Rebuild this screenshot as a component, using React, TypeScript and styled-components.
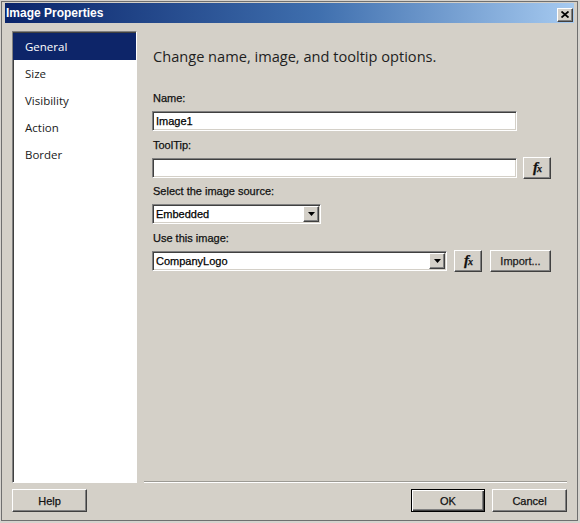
import React from 'react';
import styled, { createGlobalStyle, css } from 'styled-components';

const GlobalStyle = createGlobalStyle`
  html, body {
    margin: 0;
    padding: 0;
    background: #d6d3ce;
  }
  body {
    font-family: 'Liberation Sans', Arial, sans-serif;
    font-size: 11px;
    color: #000;
  }
  * {
    box-sizing: border-box;
  }
`;

const raised = css`
  background: #d4d0c8;
  border: 1px solid;
  border-color: #ffffff #404040 #404040 #ffffff;
  box-shadow: inset -1px -1px #808080;
`;

const sunken = css`
  background: #ffffff;
  border: 1px solid;
  border-color: #808080 #ffffff #ffffff #808080;
  box-shadow: inset 1px 1px #404040, inset -1px -1px #d4d0c8;
`;

// Tahoma-ish heavier look for the small dialog text
const heavy = css`
  -webkit-text-stroke: 0.25px currentColor;
`;

const Window = styled.div`
  margin: 1px 0 0 1px;
  width: 577px;
  height: 520px;
  background: #d4d0c8;
  border: 1px solid #6f6f6f;
  padding: 1px 3px 0 3px;
  display: flex;
  flex-direction: column;
`;

const TitleBar = styled.div`
  height: 20px;
  flex-shrink: 0;
  display: flex;
  align-items: center;
  justify-content: space-between;
  padding: 0 1px 0 1px;
  background: linear-gradient(to right, #0a246a 0%, #3f6fae 55%, #a6caf0 100%);
`;

const Title = styled.span`
  color: #fff;
  font-weight: bold;
  font-size: 12px;
`;

const CloseButton = styled.button`
  ${raised};
  width: 16px;
  height: 14px;
  padding: 0;
  margin-top: 3px;
  display: flex;
  align-items: center;
  justify-content: center;
`;

const Body = styled.div`
  flex: 1;
  display: flex;
  gap: 7px;
  padding: 8px 7px 0 7px;
  min-height: 0;
`;

const Nav = styled.div`
  width: 125px;
  flex-shrink: 0;
  background: #fff;
  border: 1px solid;
  border-color: #808080 #ffffff #ffffff #808080;
  box-shadow: inset 1px 1px #404040;
  padding-top: 1px;
`;

const NavItem = styled.div<{ selected?: boolean }>`
  height: 27px;
  line-height: 27px;
  padding-left: 12px;
  font-family: 'Open Sans', 'Noto Sans', sans-serif;
  font-size: 11.5px;
  color: ${(p) => (p.selected ? '#ffffff' : '#1a1a1a')};
  background: ${(p) => (p.selected ? '#0d2569' : 'transparent')};
`;

const Content = styled.div`
  flex: 1;
  display: flex;
  flex-direction: column;
  padding-left: 8px;
  border-bottom: 1px solid #9c9a94;
  box-shadow: 0 1px #ffffff;
  margin-bottom: 1px;
`;

const Heading = styled.h1`
  margin: 15px 0 0 1px;
  font-family: 'Open Sans', 'Noto Sans', sans-serif;
  font-weight: normal;
  font-size: 14.6px;
  line-height: 20px;
  color: #1e1e1e;
`;

const Form = styled.div`
  margin-top: 24px;
  display: flex;
  flex-direction: column;
`;

const Field = styled.div`
  margin-bottom: 5.5px;
`;

const Label = styled.div`
  ${heavy};
  line-height: 16px;
  margin: 0 0 5px 1px;
  color: #111;
`;

const Row = styled.div`
  display: flex;
  align-items: center;
`;

const TextBox = styled.div<{ width: number }>`
  ${sunken};
  ${heavy};
  width: ${(p) => p.width}px;
  height: 20px;
  display: flex;
  align-items: center;
  padding: 0 0 0 3px;
  color: #000;
`;

const Value = styled.span`
  flex: 1;
`;

const DropButton = styled.div`
  ${raised};
  width: 16px;
  height: 16px;
  margin-right: 1px;
  display: flex;
  align-items: center;
  justify-content: center;
`;

const ToolButton = styled.button<{ width: number; gap: number }>`
  ${raised};
  ${heavy};
  width: ${(p) => p.width}px;
  height: 22px;
  margin: -1px 0 -1px ${(p) => p.gap}px;
  padding: 0;
  font-family: 'Liberation Sans', Arial, sans-serif;
  font-size: 11px;
  color: #1a1a1a;
  display: flex;
  align-items: center;
  justify-content: center;
`;

const Fx = styled.span`
  font-family: 'Liberation Serif', 'Times New Roman', serif;
  font-style: italic;
  font-weight: bold;
  font-size: 15px;
  color: #111;
  letter-spacing: -1px;
  small {
    font-size: 10px;
  }
`;

const Footer = styled.div`
  flex-shrink: 0;
  display: flex;
  justify-content: space-between;
  padding: 6px 7px 8px 7px;
`;

const ButtonGroup = styled.div`
  display: flex;
  gap: 7px;
`;

const DialogButton = styled.button<{ width: number; isDefault?: boolean }>`
  ${raised};
  ${heavy};
  width: ${(p) => p.width}px;
  height: 23px;
  padding: 0;
  font-family: 'Liberation Sans', Arial, sans-serif;
  font-size: 11px;
  color: #111;
  ${(p) =>
    p.isDefault &&
    css`
      border: 1px solid #000;
      box-shadow: inset 1px 1px #ffffff, inset -1px -1px #404040,
        inset -2px -2px #808080;
    `}
`;

const DownArrow = () => (
  <svg width="7" height="4" viewBox="0 0 7 4">
    <path d="M0 0h7L3.5 4z" fill="#000" />
  </svg>
);

const CloseIcon = () => (
  <svg width="8" height="7" viewBox="0 0 8 7">
    <path d="M0.5 0.5L7.5 6.5M7.5 0.5L0.5 6.5" stroke="#000" strokeWidth="1.8" />
  </svg>
);

const FxLabel = () => (
  <Fx>
    f<small>x</small>
  </Fx>
);

const navItems = ['General', 'Size', 'Visibility', 'Action', 'Border'];

const App: React.FC = () => {
  return (
    <>
      <GlobalStyle />
      <Window>
        <TitleBar>
          <Title>Image Properties</Title>
          <CloseButton>
            <CloseIcon />
          </CloseButton>
        </TitleBar>
        <Body>
          <Nav>
            {navItems.map((item) => (
              <NavItem key={item} selected={item === 'General'}>
                {item}
              </NavItem>
            ))}
          </Nav>
          <Content>
            <Heading>Change name, image, and tooltip options.</Heading>
            <Form>
              <Field>
                <Label>Name:</Label>
                <Row>
                  <TextBox width={365}>
                    <Value>Image1</Value>
                  </TextBox>
                </Row>
              </Field>
              <Field>
                <Label>ToolTip:</Label>
                <Row>
                  <TextBox width={365} />
                  <ToolButton width={28} gap={6}>
                    <FxLabel />
                  </ToolButton>
                </Row>
              </Field>
              <Field>
                <Label>Select the image source:</Label>
                <Row>
                  <TextBox width={169}>
                    <Value>Embedded</Value>
                    <DropButton>
                      <DownArrow />
                    </DropButton>
                  </TextBox>
                </Row>
              </Field>
              <Field>
                <Label>Use this image:</Label>
                <Row>
                  <TextBox width={295}>
                    <Value>CompanyLogo</Value>
                    <DropButton>
                      <DownArrow />
                    </DropButton>
                  </TextBox>
                  <ToolButton width={28} gap={7}>
                    <FxLabel />
                  </ToolButton>
                  <ToolButton width={61} gap={8}>
                    Import...
                  </ToolButton>
                </Row>
              </Field>
            </Form>
          </Content>
        </Body>
        <Footer>
          <DialogButton width={75}>Help</DialogButton>
          <ButtonGroup>
            <DialogButton width={74} isDefault>
              OK
            </DialogButton>
            <DialogButton width={75}>Cancel</DialogButton>
          </ButtonGroup>
        </Footer>
      </Window>
    </>
  );
};

export default App;
